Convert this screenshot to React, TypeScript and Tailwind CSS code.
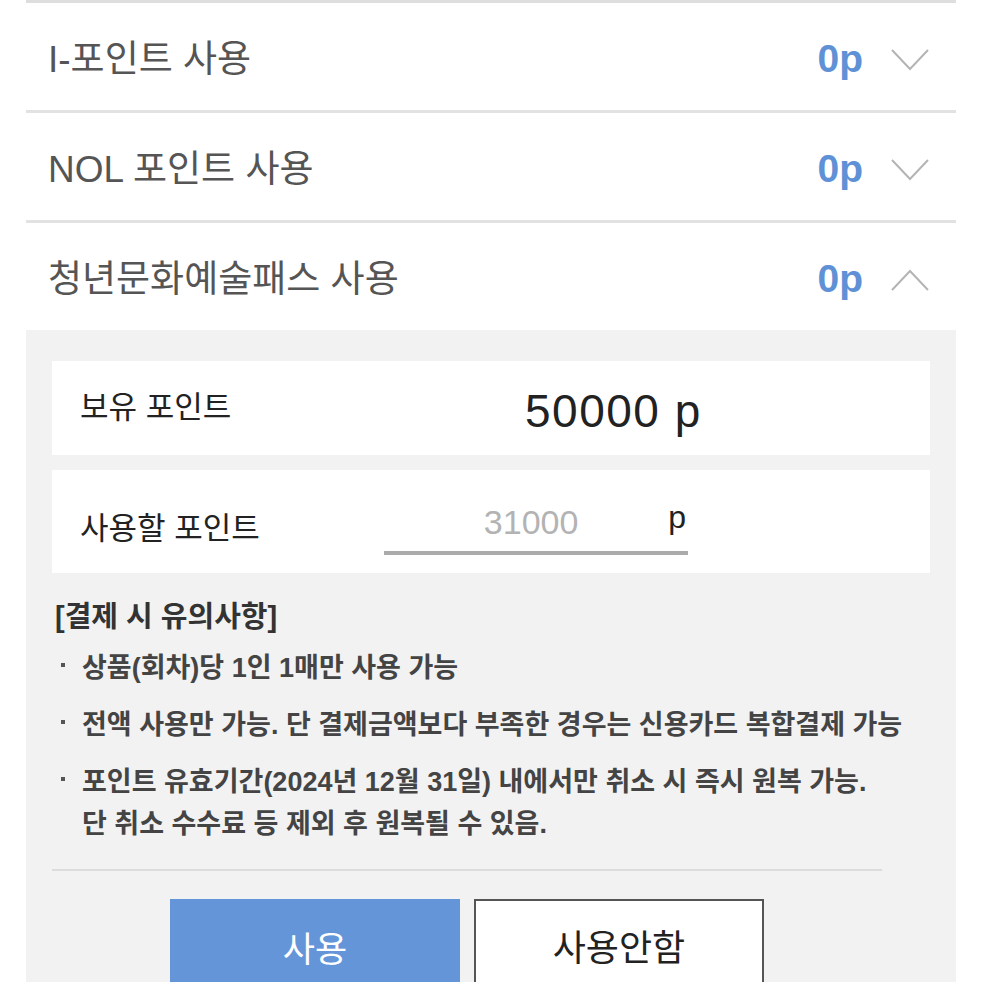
import React from "react";

const FONT = { fontFamily: '"Liberation Sans", "Noto Sans CJK KR", sans-serif' };

function Chevron({ up }: { up?: boolean }) {
  return (
    <svg width="38" height="22" viewBox="0 0 38 22" fill="none">
      {up ? (
        <path d="M1 21 L19 2 L37 21" stroke="#b4b4b4" strokeWidth="2" />
      ) : (
        <path d="M1 1 L19 20 L37 1" stroke="#b4b4b4" strokeWidth="2" />
      )}
    </svg>
  );
}

function Row({ label, up }: { label: string; up?: boolean }) {
  return (
    <div className="flex h-[110px] items-center border-b-[3px] border-[#e2e2e2] pl-[22px] pr-[27px]">
      <div className="mt-[6px] flex-1 text-[37px] text-[#555555]">{label}</div>
      <div className="mt-[4px] text-[39px] font-bold leading-none text-[#5f91d6]">0p</div>
      <div className="ml-[28px] mt-[6px] flex items-center">
        <Chevron up={up} />
      </div>
    </div>
  );
}

function Dot() {
  return (
    <span className="flex w-[27px] pl-[6px] pt-[16px]">
      <span className="h-[4px] w-[4px] bg-[#555555]" />
    </span>
  );
}

export default function App() {
  return (
    <div className="h-[982px] w-[982px] overflow-hidden bg-white" style={FONT}>
      <div className="mx-[26px] w-[930px]">
        <div className="h-[3px] bg-[#dedede]" />
        <Row label="I-포인트 사용" />
        <Row label="NOL 포인트 사용" />
        <Row label="청년문화예술패스 사용" up />
        <div className="-mt-[3px] bg-[#f2f2f2] pt-[31px] pb-[40px]">
          <div className="mx-[26px] flex h-[94px] items-center bg-white pl-[28px]">
            <div className="w-[445px] text-[31px] text-[#222222]">보유 포인트</div>
            <div className="mt-[6px] text-[46px] leading-none tracking-[1.5px] text-[#222222]">50000 p</div>
          </div>
          <div className="mx-[26px] mt-[15px] flex h-[103px] bg-white pl-[28px]">
            <div className="mt-[39px] w-[304px] text-[31px] leading-[40px] text-[#222222]">사용할 포인트</div>
            <div className="mt-[32px] flex h-[53px] w-[304px] items-start border-b-4 border-[#ababab]">
              <div className="flex-1 pl-[10px] text-center text-[34px] leading-[40px] text-[#b3b3b3]">31000</div>
              <div className="mr-[2px] text-[32px] leading-[30px] text-[#222222]">p</div>
            </div>
          </div>
          <div className="mt-[26px] pl-[29px] pr-[30px]">
            <div className="text-[29px] font-bold leading-[36px] text-[#333333]">[결제 시 유의사항]</div>
            <div className="mt-[12px] flex flex-col gap-[15px] text-[27px] font-semibold leading-[42px] text-[#444444]">
              <div className="flex">
                <Dot />
                <span>상품(회차)당 1인 1매만 사용 가능</span>
              </div>
              <div className="flex">
                <Dot />
                <span className="whitespace-nowrap">전액 사용만 가능. 단 결제금액보다 부족한 경우는 신용카드 복합결제 가능</span>
              </div>
              <div className="flex">
                <Dot />
                <span className="whitespace-nowrap">
                  포인트 유효기간(2024년 12월 31일) 내에서만 취소 시 즉시 원복 가능.
                  <br />
                  단 취소 수수료 등 제외 후 원복될 수 있음.
                </span>
              </div>
            </div>
          </div>
          <div className="ml-[26px] mr-[74px] mt-[24px] h-[2px] bg-[#dcdcdc]" />
          <div className="ml-[26px] mr-[74px] mt-[28px] flex justify-center gap-[14px]">
            <button className="h-[100px] w-[290px] bg-[#6595d9] pt-[2px] text-[35px] text-white">사용</button>
            <button className="h-[100px] w-[290px] border-2 border-[#555555] bg-white text-[36px] text-[#222222]">사용안함</button>
          </div>
        </div>
      </div>
    </div>
  );
}
